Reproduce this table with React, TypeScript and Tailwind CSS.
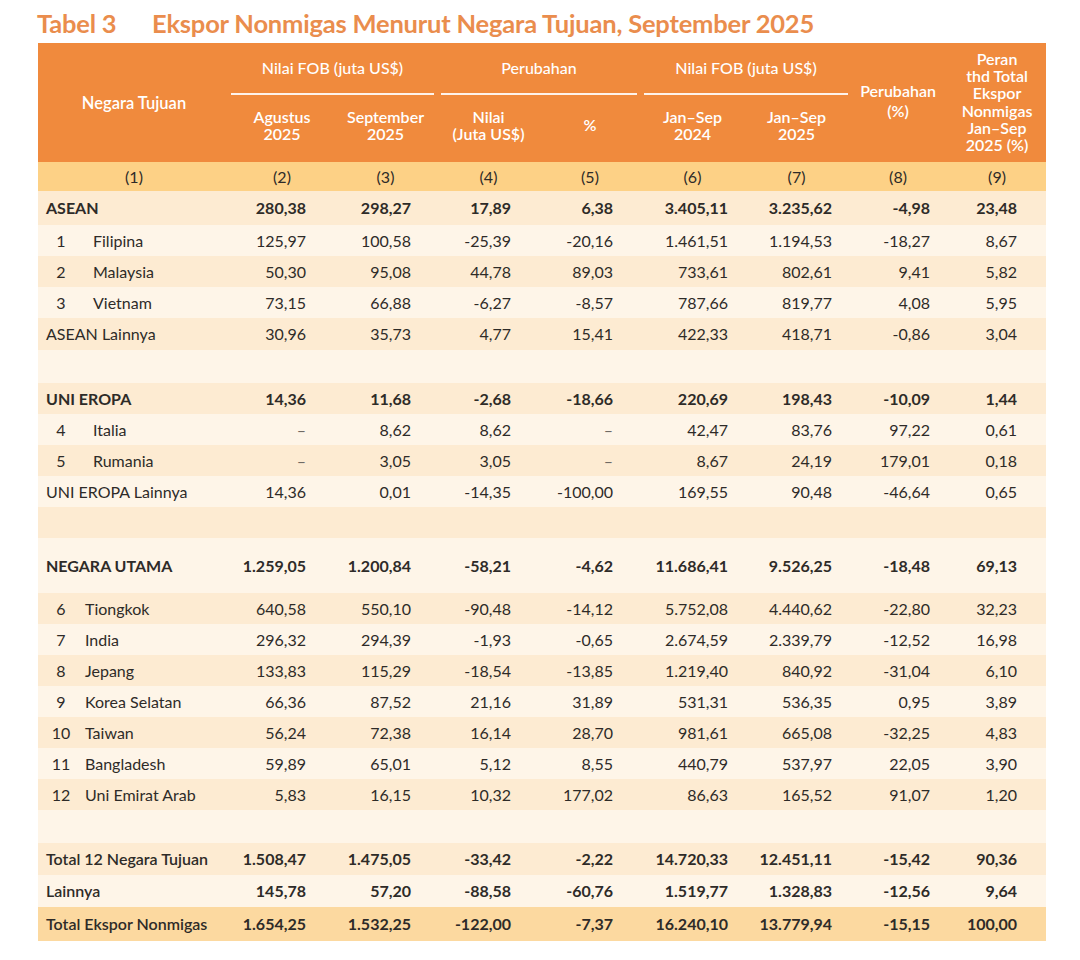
import React from "react";

type Row =
  | { kind: "section"; label: string; values: string[] }
  | { kind: "item"; no: string; label: string; values: string[]; indent: string }
  | { kind: "other"; label: string; values: string[]; h?: string }
  | { kind: "total"; label: string; values: string[]; strong?: boolean }
  | { kind: "blank"; h: string };

const rows: Row[] = [
  { kind: "section", label: "ASEAN", values: ["280,38", "298,27", "17,89", "6,38", "3.405,11", "3.235,62", "-4,98", "23,48"] },
  { kind: "item", no: "1", label: "Filipina", indent: "pl-[17px]", values: ["125,97", "100,58", "-25,39", "-20,16", "1.461,51", "1.194,53", "-18,27", "8,67"] },
  { kind: "item", no: "2", label: "Malaysia", indent: "pl-[17px]", values: ["50,30", "95,08", "44,78", "89,03", "733,61", "802,61", "9,41", "5,82"] },
  { kind: "item", no: "3", label: "Vietnam", indent: "pl-[17px]", values: ["73,15", "66,88", "-6,27", "-8,57", "787,66", "819,77", "4,08", "5,95"] },
  { kind: "other", label: "ASEAN Lainnya", h: "h-[32px]", values: ["30,96", "35,73", "4,77", "15,41", "422,33", "418,71", "-0,86", "3,04"] },
  { kind: "blank", h: "h-[33px]" },
  { kind: "section", label: "UNI EROPA", values: ["14,36", "11,68", "-2,68", "-18,66", "220,69", "198,43", "-10,09", "1,44"] },
  { kind: "item", no: "4", label: "Italia", indent: "pl-[17px]", values: ["–", "8,62", "8,62", "–", "42,47", "83,76", "97,22", "0,61"] },
  { kind: "item", no: "5", label: "Rumania", indent: "pl-[17px]", values: ["–", "3,05", "3,05", "–", "8,67", "24,19", "179,01", "0,18"] },
  { kind: "other", label: "UNI EROPA Lainnya", values: ["14,36", "0,01", "-14,35", "-100,00", "169,55", "90,48", "-46,64", "0,65"] },
  { kind: "blank", h: "h-[31px]" },
  { kind: "section", label: "NEGARA UTAMA", values: ["1.259,05", "1.200,84", "-58,21", "-4,62", "11.686,41", "9.526,25", "-18,48", "69,13"] },
  { kind: "item", no: "6", label: "Tiongkok", indent: "pl-[9px]", values: ["640,58", "550,10", "-90,48", "-14,12", "5.752,08", "4.440,62", "-22,80", "32,23"] },
  { kind: "item", no: "7", label: "India", indent: "pl-[9px]", values: ["296,32", "294,39", "-1,93", "-0,65", "2.674,59", "2.339,79", "-12,52", "16,98"] },
  { kind: "item", no: "8", label: "Jepang", indent: "pl-[9px]", values: ["133,83", "115,29", "-18,54", "-13,85", "1.219,40", "840,92", "-31,04", "6,10"] },
  { kind: "item", no: "9", label: "Korea Selatan", indent: "pl-[9px]", values: ["66,36", "87,52", "21,16", "31,89", "531,31", "536,35", "0,95", "3,89"] },
  { kind: "item", no: "10", label: "Taiwan", indent: "pl-[9px]", values: ["56,24", "72,38", "16,14", "28,70", "981,61", "665,08", "-32,25", "4,83"] },
  { kind: "item", no: "11", label: "Bangladesh", indent: "pl-[9px]", values: ["59,89", "65,01", "5,12", "8,55", "440,79", "537,97", "22,05", "3,90"] },
  { kind: "item", no: "12", label: "Uni Emirat Arab", indent: "pl-[9px]", values: ["5,83", "16,15", "10,32", "177,02", "86,63", "165,52", "91,07", "1,20"] },
  { kind: "blank", h: "h-[33px]" },
  { kind: "total", label: "Total 12 Negara Tujuan", values: ["1.508,47", "1.475,05", "-33,42", "-2,22", "14.720,33", "12.451,11", "-15,42", "90,36"] },
  { kind: "total", label: "Lainnya", values: ["145,78", "57,20", "-88,58", "-60,76", "1.519,77", "1.328,83", "-12,56", "9,64"] },
  { kind: "total", label: "Total Ekspor Nonmigas", strong: true, values: ["1.654,25", "1.532,25", "-122,00", "-7,37", "16.240,10", "13.779,94", "-15,15", "100,00"] },
];

// right padding per number column (2..9)
const pads = ["pr-[28px]", "pr-[26px]", "pr-[29px]", "pr-[27px]", "pr-[17px]", "pr-[16px]", "pr-[18px]", "pr-[29px]"];

function Cells({ values, bold }: { values: string[]; bold?: boolean }) {
  return (
    <>
      {values.map((v, i) => (
        <td key={i} className={`text-right ${pads[i]} ${bold ? "font-bold" : ""} ${v === "–" ? "text-[#6f6a64]" : ""}`}>
          {v}
        </td>
      ))}
    </>
  );
}

export default function App() {
  return (
    <div className="min-h-[960px] w-[1080px] bg-white text-[#2e2b28]" style={{ fontFamily: "Lato, 'Open Sans', sans-serif" }}>
      <div className="pl-[37px] pt-[7px] h-[43px] flex items-start text-[25.5px] font-bold leading-[32px] text-[#ea8d4d] tracking-[-0.2px]">
        <span className="w-[115px]">Tabel 3</span>
        <span>Ekspor Nonmigas Menurut Negara Tujuan, September 2025</span>
      </div>

      <table className="ml-[38px] w-[1008px] table-fixed border-collapse text-[16px]">
        <colgroup>
          <col className="w-[192px]" />
          <col className="w-[104px]" />
          <col className="w-[103px]" />
          <col className="w-[103px]" />
          <col className="w-[100px]" />
          <col className="w-[105px]" />
          <col className="w-[103px]" />
          <col className="w-[100px]" />
          <col className="w-[98px]" />
        </colgroup>
        <thead className="bg-[#f08a3d] text-white">
          <tr className="h-[52px]">
            <th rowSpan={2} className="font-semibold text-[16.5px] align-middle pt-[2px]">Negara Tujuan</th>
            <th colSpan={2} className="font-medium p-0 align-bottom">
              <div className="ml-[1px] mr-[3px] border-b-2 border-white/90 pb-[13px]">Nilai FOB (juta US$)</div>
            </th>
            <th colSpan={2} className="font-medium p-0 align-bottom">
              <div className="ml-[4px] mr-[3px] border-b-2 border-white/90 pb-[13px]">Perubahan</div>
            </th>
            <th colSpan={2} className="font-medium p-0 align-bottom">
              <div className="ml-[4px] border-b-2 border-white/90 pb-[13px]">Nilai FOB (juta US$)</div>
            </th>
            <th rowSpan={2} className="font-semibold leading-[20px] align-middle pb-[4px]">
              Perubahan
              <br />
              (%)
            </th>
            <th rowSpan={2} className="font-semibold leading-[17.3px] align-middle pb-[2px]">
              Peran
              <br />
              thd Total
              <br />
              Ekspor
              <br />
              Nonmigas
              <br />
              Jan–Sep
              <br />
              2025 (%)
            </th>
          </tr>
          <tr className="h-[67px] leading-[17px]">
            <th className="font-semibold pb-[8px]">
              Agustus
              <br />
              2025
            </th>
            <th className="font-semibold pb-[8px]">
              September
              <br />
              2025
            </th>
            <th className="font-semibold pb-[8px]">
              Nilai
              <br />
              (Juta US$)
            </th>
            <th className="font-semibold pb-[8px]">%</th>
            <th className="font-semibold pb-[8px]">
              Jan–Sep
              <br />
              2024
            </th>
            <th className="font-semibold pb-[8px]">
              Jan–Sep
              <br />
              2025
            </th>
          </tr>
          <tr className="h-[29px] bg-[#fdd186] text-[#2e2b28]">
            {["(1)", "(2)", "(3)", "(4)", "(5)", "(6)", "(7)", "(8)", "(9)"].map((c) => (
              <th key={c} className="font-normal">
                {c}
              </th>
            ))}
          </tr>
        </thead>
        <tbody>
          {rows.map((r, idx) => {
            const bg = idx % 2 === 0 ? "bg-[#fdebd2]" : "bg-[#fef5e8]";
            if (r.kind === "blank") {
              return (
                <tr key={idx} className={`${r.h} ${bg}`}>
                  <td colSpan={9} />
                </tr>
              );
            }
            const h = idx === 0 ? "h-[34px]" : idx >= 20 ? "h-[32px]" : "h-[31px]";
            if (r.kind === "section") {
              const tall = r.label === "NEGARA UTAMA" ? "h-[55px]" : h;
              return (
                <tr key={idx} className={`${tall} ${bg}`}>
                  <td className="pl-[8px] font-bold">{r.label}</td>
                  <Cells values={r.values} bold />
                </tr>
              );
            }
            if (r.kind === "item") {
              return (
                <tr key={idx} className={`${h} ${bg}`}>
                  <td className="pl-[8px]">
                    <div className="flex items-center">
                      <span className="w-[30px] text-center">{r.no}</span>
                      <span className={r.indent}>{r.label}</span>
                    </div>
                  </td>
                  <Cells values={r.values} />
                </tr>
              );
            }
            if (r.kind === "other") {
              return (
                <tr key={idx} className={`${r.h ?? h} ${bg}`}>
                  <td className="pl-[8px] whitespace-nowrap">{r.label}</td>
                  <Cells values={r.values} />
                </tr>
              );
            }
            return (
              <tr key={idx} className={`${r.strong ? "h-[34px] bg-[#fcd9a0]" : `${h} ${bg}`}`}>
                <td className="pl-[8px] font-semibold whitespace-nowrap">{r.label}</td>
                <Cells values={r.values} bold />
              </tr>
            );
          })}
        </tbody>
      </table>
    </div>
  );
}
